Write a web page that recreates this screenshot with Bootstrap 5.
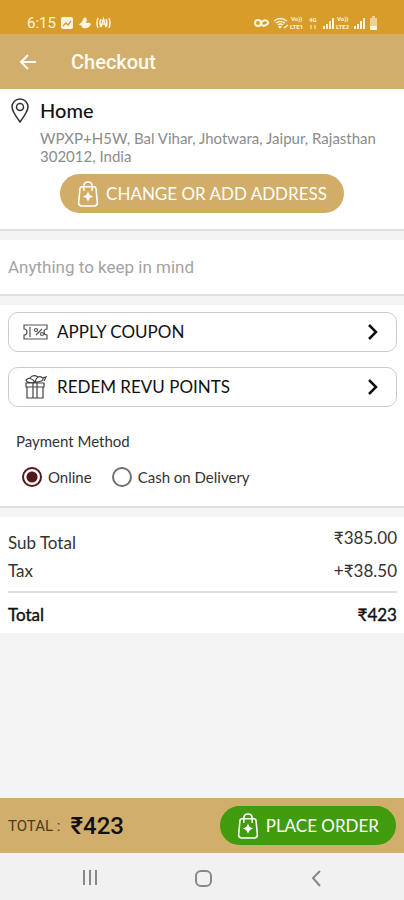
<!DOCTYPE html>
<html lang="en">
<head>
<meta charset="utf-8">
<meta name="viewport" content="width=device-width, initial-scale=1">
<title>Checkout</title>
<link href="https://cdn.jsdelivr.net/npm/bootstrap@5.3.0/dist/css/bootstrap.min.css" rel="stylesheet">
<style>
  body { font-family: Lato, "Noto Sans", sans-serif; background: #f4f4f4; color: #333; font-size: 17px; line-height: 24px; }
  svg { display: block; flex: none; }
  .roboto { font-family: Roboto, sans-serif; }
  .status { background: #d89c2a; color: #fff5dc; height: 34px; padding: 12px 24px 0 27px; font-size: 15px; }
  .status svg text { font: 700 6px Roboto, sans-serif; fill: #fff5dc; }
  .topbar { background: #d1ae6c; color: #fffaf0; height: 55px; padding: 0 18px; gap: 33px; }
  .topbar h1 { font-size: 20px; line-height: 24px; font-weight: 500; }
  .panel { background: #fff; border-bottom: 2px solid #e0e0e0; margin-bottom: 9px; }
  .place { padding: 9px 8px 16px; }
  .place h2 { font-size: 20px; line-height: 24px; color: #111; font-weight: 500; }
  .place p { font-size: 15px; line-height: 18px; color: #8c8c8c; padding-top: 7px; margin-bottom: 9px; }
  .pill { height: 39px; border: 0; color: #fff; font-size: 17px; line-height: 24px; padding: 0 17px; gap: 7px; }
  .pill-gold, .pill-gold:hover { background: #d1ad68; color: #fff; }
  .pill-green, .pill-green:hover { background: #409c0c; color: #fff; }
  .note { font-size: 17px; line-height: 24px; height: 54px; padding: 0 8px; color: #222; }
  .note::placeholder { color: #a3a3a3; opacity: 1; }
  .options { padding: 7px 7px 17px 8px; }
  .option { height: 40px; border: 1px solid #ccc; border-radius: 10px; background: #fff; color: #111; font-size: 17px; padding: 0 16px 0 13px; text-align: left; }
  .option + .option { margin-top: 15px; }
  .pay { padding: 22px 8px 0; }
  .pay legend { font-size: 15px; line-height: 24px; color: #333; margin-bottom: 12px; }
  .pay label { font-size: 15px; line-height: 24px; color: #333; padding-left: 6px; }
  .pay .form-check-input { width: 20px; height: 20px; margin: 0; border: 2px solid #707070; background-image: none; box-shadow: none; }
  .pay .form-check-input:checked { border-color: #55161c; background: radial-gradient(circle, #55161c 5px, #fff 6px); }
  .pay .choices { padding-left: 6px; gap: 20px; }
  .totals { background: #fff; padding: 9px 7px 6px 8px; }
  .first-line { height: 29px; }
  .totals .rule { border-top: 2px solid #ddd; margin: 8px 0 10px; }
  .strong-line { color: #111; -webkit-text-stroke: 0.4px #111; }
  .paybar { background: #d1ae6c; height: 55px; padding: 0 8px; color: #111; }
  .paybar .caption { font-size: 15px; color: #4a3b22; margin-right: 10px; }
  .paybar .sum { font-size: 24px; font-weight: 500; }
  .sysnav { background: #f1f1f1; height: 47px; padding: 0 78px 0 80px; }
</style>
<script src="https://cdn.jsdelivr.net/npm/bootstrap@5.3.0/dist/js/bootstrap.bundle.min.js"></script>
</head>
<body>
<svg width="0" height="0" class="position-absolute" aria-hidden="true">
  <symbol id="bag" viewBox="0 0 20 25">
    <g fill="none" stroke="currentColor" stroke-width="1.5" stroke-linejoin="round" stroke-linecap="round">
      <path d="M4 5.500h12q1.500 0 1.700 1.500L19 21q0 3-3 3H4q-3 0-3-3L2.300 7Q2.500 5.500 4 5.500z"/>
      <path d="M6 9V5q0-4 4-4t4 4v4"/>
    </g>
    <path d="M10 11.500q.8 2.700 3.500 3.500-2.700.8-3.500 3.500-.8-2.700-3.500-3.500 2.700-.8 3.500-3.500z" fill="currentColor" stroke="currentColor"/>
  </symbol>
</svg>
<div class="min-vh-100 d-flex flex-column">
  <div class="status roboto d-flex justify-content-between align-items-center">
    <div class="d-flex align-items-center">
      <span>6:15</span>
      <svg class="ms-1" width="52" height="14" viewBox="0 0 52 14" aria-hidden="true">
        <rect x="1" y="1" width="12" height="12" rx="2" fill="#fff5dc"/>
        <path d="M3 10l3-3 2 2 3-4" fill="none" stroke="#d89c2a" stroke-width="1.300"/>
        <path d="M25 1q3 2 1 6 4-1 5 1-1 3-4 4-4 1-5-1 0-2-3-2 1-2 3-3 1-4 3-5z" fill="#fff5dc"/>
        <g fill="none" stroke="#fff5dc" stroke-width="1.500"><path d="M38 2q-2 5 0 10M41 3q-2 4 0 8M49 2q2 5 0 10M46 3q2 4 0 8M41 11l2.500-8 2.500 8M42 8h3"/></g>
      </svg>
    </div>
    <svg width="127" height="14" viewBox="0 0 127 14" aria-hidden="true">
      <g fill="none" stroke="#fff5dc" stroke-width="2"><circle cx="5" cy="7" r="3"/><path d="M8 7q3-4 6-2t-1 4-5-2"/></g>
      <g fill="none" stroke="#fff5dc" stroke-width="1.500"><path d="M21 5q6-5 13 0M23 7q4-3 9 0M25 9q2-2 5 0M31 12l4-3"/></g>
      <path d="M25 10h4l-2 3z" fill="#fff5dc"/>
      <text x="38" y="5">Vo))</text><text x="37" y="13">LTE1</text>
      <text x="56" y="6">4G</text><path d="M58 13v-4M62 9v4" stroke="#fff5dc"/>
      <path d="M71 13v-3M74 13V8M77 13V5M80 13V2" stroke="#fff5dc" stroke-width="2"/>
      <text x="84" y="5">Vo))</text><text x="83" y="13">LTE2</text>
      <path d="M102 13v-3M105 13V8M108 13V5M111 13V2" stroke="#fff5dc" stroke-width="2"/>
      <path d="M117 2h2V0h3v2h2v12h-7z" fill="#fff5dc" opacity=".6"/><path d="M117 10h7v4h-7z" fill="#fff5dc"/>
    </svg>
  </div>

  <header class="topbar d-flex align-items-center">
    <a href="#" class="text-reset" aria-label="Back">
      <svg width="20" height="20" viewBox="0 0 20 20" fill="none" stroke="currentColor" stroke-width="2"><path d="M18 10H4M10 3l-7 7 7 7"/></svg>
    </a>
    <h1 class="roboto m-0">Checkout</h1>
  </header>

  <main class="flex-grow-1">
    <section class="panel place">
      <div class="d-flex">
        <svg width="24" height="26" viewBox="0 0 24 26" fill="none" stroke="#333" stroke-width="1.500"><path d="M12 24Q4 13 4 9a8 8 0 0 1 16 0q0 4-8 15z"/><circle cx="12" cy="9" r="3.500"/></svg>
        <div class="ms-2">
          <h2 class="m-0">Home</h2>
          <p>WPXP+H5W, Bal Vihar, Jhotwara, Jaipur, Rajasthan 302012, India</p>
        </div>
      </div>
      <div class="text-center">
        <button type="button" class="btn pill pill-gold rounded-pill d-inline-flex align-items-center">
          <svg width="22" height="26" aria-hidden="true"><use href="#bag"/></svg>
          <span>CHANGE OR ADD ADDRESS</span>
        </button>
      </div>
    </section>

    <section class="panel">
      <input type="text" class="note roboto form-control border-0 rounded-0 shadow-none" placeholder="Anything to keep in mind" aria-label="Anything to keep in mind">
    </section>

    <section class="panel options">
      <button type="button" class="option w-100 d-flex align-items-center">
        <svg width="27" height="26" viewBox="0 0 27 26" fill="none" stroke="#555" stroke-width="1.200" aria-hidden="true">
          <path d="M2 6h23v4q-3 0-3 3t3 3v4H2v-4q3 0 3-3t-3-3zM8 8v10M14 16l6-6"/><circle cx="14" cy="11" r="1.500"/><circle cx="20" cy="15" r="1.500"/>
        </svg>
        <span class="flex-grow-1 ms-2">APPLY COUPON</span>
        <svg width="14" height="20" viewBox="0 0 14 20" fill="none" stroke="#111" stroke-width="2.500" aria-hidden="true"><path d="M3 3l7 7-7 7"/></svg>
      </button>
      <button type="button" class="option w-100 d-flex align-items-center">
        <svg width="27" height="26" viewBox="0 0 27 26" fill="none" stroke="#444" stroke-width="1.200" aria-hidden="true">
          <path d="M4 9h18v4H4zM5 13v11h16V13M11 9v15M15 9v15M13 8Q5 10 4 6q4-4 9 2 2-8 8-4 1 4-8 4M8 4q3-4 8-1M20 4l4-1-2 4"/>
        </svg>
        <span class="flex-grow-1 ms-2">REDEM REVU POINTS</span>
        <svg width="14" height="20" viewBox="0 0 14 20" fill="none" stroke="#111" stroke-width="2.500" aria-hidden="true"><path d="M3 3l7 7-7 7"/></svg>
      </button>
      <fieldset class="pay">
        <legend>Payment Method</legend>
        <div class="choices d-flex">
          <div class="d-flex align-items-center">
            <input class="form-check-input" type="radio" name="pay" id="online" checked>
            <label for="online">Online</label>
          </div>
          <div class="d-flex align-items-center">
            <input class="form-check-input" type="radio" name="pay" id="cash">
            <label for="cash">Cash on Delivery</label>
          </div>
        </div>
      </fieldset>
    </section>

    <section class="totals">
      <div class="first-line d-flex justify-content-between"><span class="align-self-end">Sub Total</span><span>₹385.00</span></div>
      <div class="d-flex justify-content-between pt-1"><span>Tax</span><span>+₹38.50</span></div>
      <div class="rule"></div>
      <div class="strong-line d-flex justify-content-between"><span>Total</span><span>₹423</span></div>
    </section>
  </main>

  <footer>
    <div class="paybar d-flex align-items-center justify-content-between">
      <div class="roboto d-flex align-items-center"><span class="caption">TOTAL :</span><span class="sum">₹423</span></div>
      <button type="button" class="btn pill pill-green rounded-pill d-inline-flex align-items-center">
        <svg width="22" height="26" aria-hidden="true"><use href="#bag"/></svg>
        <span>PLACE ORDER</span>
      </button>
    </div>
    <nav class="sysnav d-flex align-items-center justify-content-between" aria-label="System">
      <a href="#" aria-label="Recents"><svg width="20" height="20" viewBox="0 0 20 20" stroke="#888" stroke-width="2"><path d="M4 3v15M10 3v15M16 3v15"/></svg></a>
      <a href="#" aria-label="Home"><svg width="20" height="20" viewBox="0 0 20 20" fill="none" stroke="#888" stroke-width="2"><rect x="3" y="4" width="15" height="15" rx="5"/></svg></a>
      <a href="#" aria-label="Back"><svg width="20" height="20" viewBox="0 0 20 20" fill="none" stroke="#888" stroke-width="2"><path d="M14 4l-7 7 7 8"/></svg></a>
    </nav>
  </footer>
</div>
</body>
</html>
